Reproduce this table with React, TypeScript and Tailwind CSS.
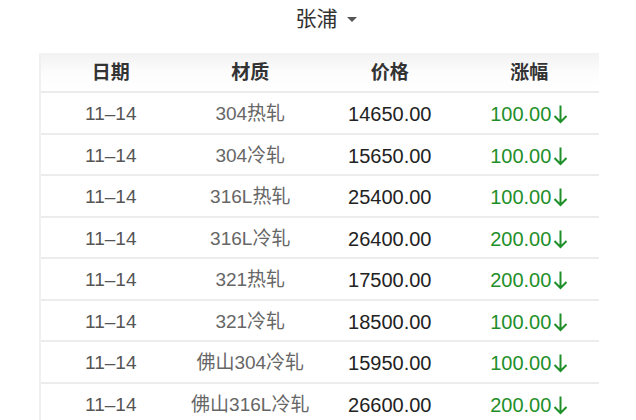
import React from "react";

const rows = [
  { date: "11–14", name: "304热轧", price: "14650.00", change: "100.00" },
  { date: "11–14", name: "304冷轧", price: "15650.00", change: "100.00" },
  { date: "11–14", name: "316L热轧", price: "25400.00", change: "100.00" },
  { date: "11–14", name: "316L冷轧", price: "26400.00", change: "200.00" },
  { date: "11–14", name: "321热轧", price: "17500.00", change: "200.00" },
  { date: "11–14", name: "321冷轧", price: "18500.00", change: "100.00" },
  { date: "11–14", name: "佛山304冷轧", price: "15950.00", change: "100.00" },
  { date: "11–14", name: "佛山316L冷轧", price: "26600.00", change: "200.00" },
];

const DownArrow = () => (
  <svg width="15" height="20" viewBox="0 0 15 20" className="ml-[2px]">
    <path d="M7.5 1.5V18M1.5 12l6 6 6-6" fill="none" stroke="currentColor" strokeWidth="2" />
  </svg>
);

const App = () => {
  return (
    <div
      className="w-[636px] h-[420px] overflow-hidden bg-white"
      style={{ fontFamily: '"Liberation Sans", "Noto Sans CJK SC", sans-serif' }}
    >
      {/* city picker */}
      <div className="h-[53px] flex justify-center pt-[6px]">
        <div className="flex items-center h-[26px] text-[21px] text-[#333] ml-[16px]">
          <span>张浦</span>
          <span className="ml-[9px] w-0 h-0 border-l-[5px] border-r-[5px] border-t-[5px] border-l-transparent border-r-transparent border-t-[#555]" />
        </div>
      </div>

      {/* table */}
      <div className="ml-[39px] w-[560px] border-l-2 border-[#f0f0f0]">
        <div className="h-[40px] pt-[2px] grid grid-cols-4 items-center text-[19px] font-bold text-[#333] bg-gradient-to-b from-[#f2f2f2] via-[#fcfcfc] to-white border-b-2 border-[#ececec]">
          <div className="text-center">日期</div>
          <div className="text-center">材质</div>
          <div className="text-center">价格</div>
          <div className="text-center">涨幅</div>
        </div>
        {rows.map((r, i) => (
          <div
            key={i}
            className="h-[41.5px] pt-[3px] grid grid-cols-4 items-center text-[19px] border-b-2 border-[#ececec]"
          >
            <div className="text-center text-[#555]">{r.date}</div>
            <div className="text-center text-[#666]">{r.name}</div>
            <div className="text-center text-[20px] text-[#222]">{r.price}</div>
            <div className="flex items-center justify-center text-[20px] text-[#1f8f2a]">
              <span>{r.change}</span>
              <DownArrow />
            </div>
          </div>
        ))}
      </div>
    </div>
  );
};

export default App;
